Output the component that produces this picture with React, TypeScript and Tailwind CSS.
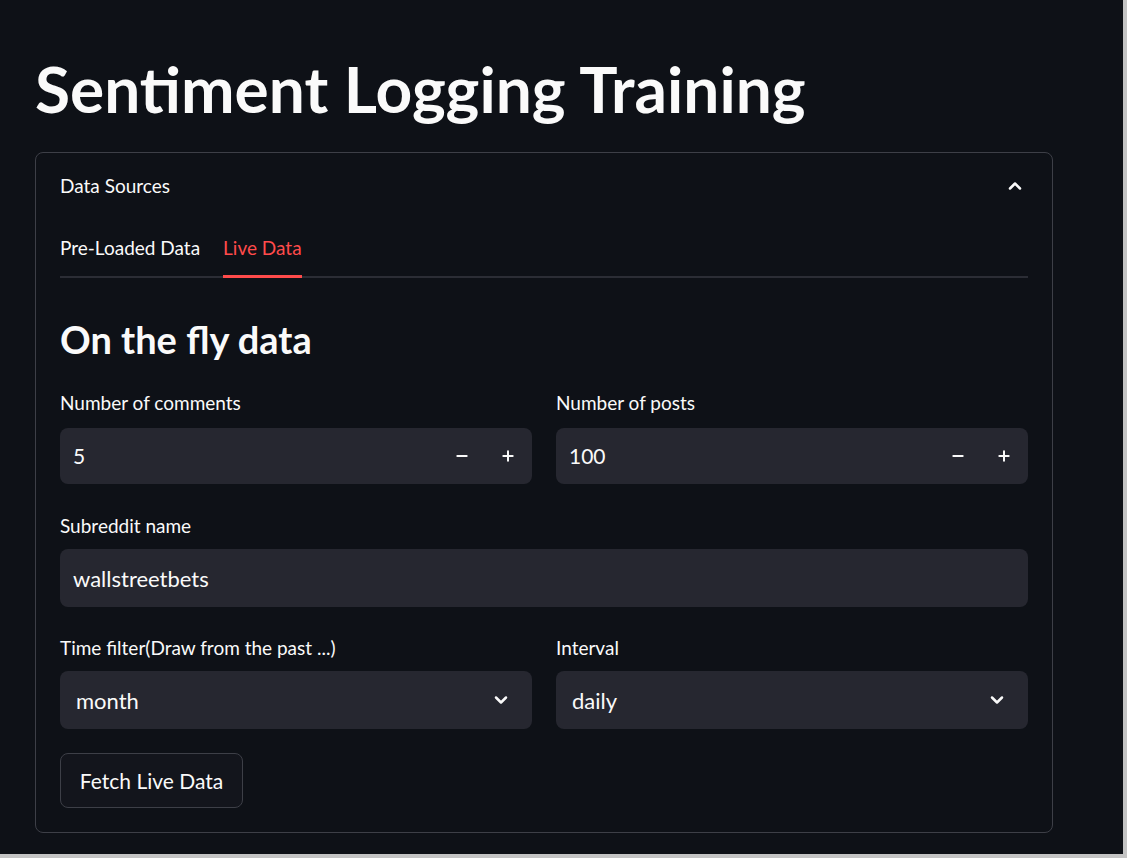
import { ChevronDown, ChevronUp, Minus, Plus } from 'lucide-react'

const FONT = "font-['Lato','Noto_Sans',sans-serif]"

function FieldLabel ({ children }: { children: React.ReactNode }) {
  return <div className="h-[24px] text-[19px] leading-[24px] text-[#fafafa]">{children}</div>
}

function NumberField ({ label, value }: { label: string; value: string }) {
  return (
    <div className="flex flex-col">
      <FieldLabel>{label}</FieldLabel>
      <div className="mt-[13px] flex h-[56px] items-center rounded-lg bg-[#262730] pl-[13px] pr-[16px]">
        <span className="flex-1 text-[21px] text-[#fafafa]">{value}</span>
        <Minus size={16} strokeWidth={3} className="mr-[30px] text-[#fafafa]" />
        <Plus size={16} strokeWidth={3} className="text-[#fafafa]" />
      </div>
    </div>
  )
}

function SelectField ({ label, value }: { label: string; value: string }) {
  return (
    <div className="flex flex-col">
      <FieldLabel>{label}</FieldLabel>
      <div className="mt-[11px] flex h-[58px] items-center rounded-lg bg-[#262730] pl-[16px] pr-[21px]">
        <span className="flex-1 text-[22px] text-[#fafafa]">{value}</span>
        <ChevronDown size={20} strokeWidth={3} className="text-[#fafafa]" />
      </div>
    </div>
  )
}

export default function App () {
  return (
    <div className={`${FONT} min-h-[858px] w-[1127px] bg-[#c4c4c4]`}>
      <div className="h-[854px] w-[1123px] overflow-hidden bg-[#0e1117]">
        <h1 className="ml-[35px] mt-[53px] text-[64px] font-bold leading-[72px] text-[#fafafa]">
          Sentiment Logging Training
        </h1>

        <section className="ml-[35px] mt-[27px] w-[1018px] rounded-lg border border-[#3d3f47]">
          <div className="flex h-[66px] items-center justify-between pl-6 pr-[27px]">
            <span className="text-[19px] text-[#fafafa]">Data Sources</span>
            <ChevronUp size={20} strokeWidth={3} className="text-[#fafafa]" />
          </div>

          <div className="px-6 pb-6">
            <div className="relative flex gap-[23px] border-b-2 border-[#2b2d35] pt-[17px]">
              <div className="pb-[16px] text-[19px] leading-[24px] text-[#fafafa]">Pre-Loaded Data</div>
              <div className="relative pb-[16px] text-[19px] leading-[24px] text-[#ff4b4b]">
                Live Data
                <div className="absolute -bottom-[2px] left-0 right-0 h-[3px] bg-[#ff4b4b]" />
              </div>
            </div>

            <h2 className="mt-[37px] text-[38px] font-bold leading-[48px] text-[#fafafa]">On the fly data</h2>

            <div className="mt-[28px] grid grid-cols-2 gap-x-6">
              <NumberField label="Number of comments" value="5" />
              <NumberField label="Number of posts" value="100" />
            </div>

            <div className="mt-[30px] flex flex-col">
              <FieldLabel>Subreddit name</FieldLabel>
              <div className="mt-[11px] flex h-[58px] items-center rounded-lg bg-[#262730] px-[13px]">
                <span className="text-[22px] text-[#fafafa]">wallstreetbets</span>
              </div>
            </div>

            <div className="mt-[29px] grid grid-cols-2 gap-x-6">
              <SelectField label="Time filter(Draw from the past ...)" value="month" />
              <SelectField label="Interval" value="daily" />
            </div>

            <button
              type="button"
              className="mt-[24px] h-[55px] w-[183px] rounded-lg border border-[#3d3f47] bg-[#13151c] text-[21px] text-[#fafafa]"
            >
              Fetch Live Data
            </button>
          </div>
        </section>
      </div>
    </div>
  )
}
